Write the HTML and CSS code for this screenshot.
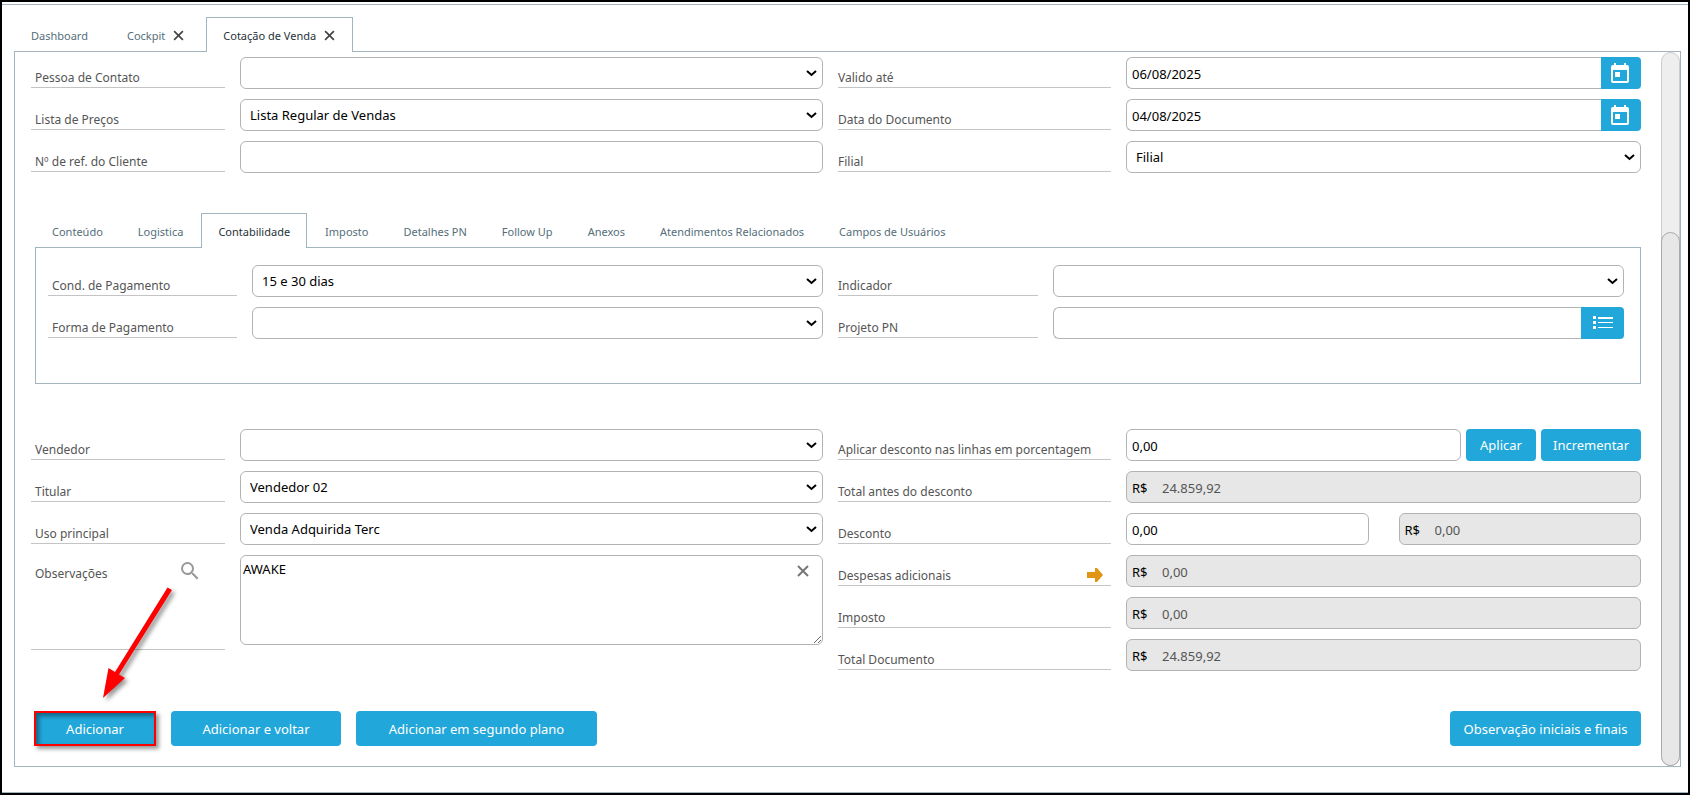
FILE: index.html
```html
<!DOCTYPE html>
<html lang="pt-BR">
<head>
    <meta charset="UTF-8">
    <meta name="viewport" content="width=device-width, initial-scale=1.0">
    <title>Cotação de Venda</title>
    <link rel="stylesheet" href="styles.css">
</head>
<body>
    <div class="window">
        <!-- Abas principais -->
        <nav class="tabs main-tabs">
            <button type="button" class="tab">Dashboard</button>
            <button type="button" class="tab">Cockpit
                <svg class="close" viewBox="0 0 10 10"><path d="M1 1l8 8M9 1l-8 8"/></svg>
            </button>
            <button type="button" class="tab active">Cotação de Venda
                <svg class="close" viewBox="0 0 10 10"><path d="M1 1l8 8M9 1l-8 8"/></svg>
            </button>
        </nav>

        <main class="panel">
            <form class="content">
                <!-- Cabeçalho -->
                <div class="grid">
                    <label for="contato" class="first">Pessoa de Contato</label>
                    <select id="contato"><option></option></select>
                    <label for="valido">Valido até</label>
                    <div class="group">
                        <input type="text" id="valido" value="06/08/2025">
                        <button type="button" class="addon" aria-label="Abrir calendário">
                            <svg class="calendar" viewBox="0 0 18 20"><path fill-rule="evenodd" d="M3 0h2v2h8V0h2v2h1a2 2 0 0 1 2 2v14a2 2 0 0 1-2 2H2a2 2 0 0 1-2-2V4a2 2 0 0 1 2-2h1zM2 7v11h14V7zM4 9h5v5H4z"/></svg>
                        </button>
                    </div>

                    <label for="precos" class="first">Lista de Preços</label>
                    <select id="precos"><option>Lista Regular de Vendas</option></select>
                    <label for="data">Data do Documento</label>
                    <div class="group">
                        <input type="text" id="data" value="04/08/2025">
                        <button type="button" class="addon" aria-label="Abrir calendário">
                            <svg class="calendar" viewBox="0 0 18 20"><path fill-rule="evenodd" d="M3 0h2v2h8V0h2v2h1a2 2 0 0 1 2 2v14a2 2 0 0 1-2 2H2a2 2 0 0 1-2-2V4a2 2 0 0 1 2-2h1zM2 7v11h14V7zM4 9h5v5H4z"/></svg>
                        </button>
                    </div>

                    <label for="ref" class="first">Nº de ref. do Cliente</label>
                    <input type="text" id="ref">
                    <label for="filial">Filial</label>
                    <select id="filial"><option>Filial</option></select>
                </div>

                <!-- Abas do documento -->
                <div class="details">
                    <nav class="tabs inner-tabs">
                        <button type="button" class="tab">Conteúdo</button>
                        <button type="button" class="tab">Logistica</button>
                        <button type="button" class="tab active">Contabilidade</button>
                        <button type="button" class="tab">Imposto</button>
                        <button type="button" class="tab">Detalhes PN</button>
                        <button type="button" class="tab">Follow Up</button>
                        <button type="button" class="tab">Anexos</button>
                        <button type="button" class="tab">Atendimentos Relacionados</button>
                        <button type="button" class="tab">Campos de Usuários</button>
                    </nav>
                    <div class="inner-panel grid">
                        <label for="cond" class="first">Cond. de Pagamento</label>
                        <select id="cond"><option>15 e 30 dias</option></select>
                        <label for="indicador">Indicador</label>
                        <select id="indicador"><option></option></select>

                        <label for="forma" class="first">Forma de Pagamento</label>
                        <select id="forma"><option></option></select>
                        <label for="projeto">Projeto PN</label>
                        <div class="group">
                            <input type="text" id="projeto">
                            <button type="button" class="addon wide" aria-label="Listar projetos">
                                <svg class="list" viewBox="0 0 20 14"><path d="M0 0h3v3H0zM0 5h3v3H0zM0 10h3v3H0zM5 1h15v2H5zM5 6h15v1H5zM5 11h15v1H5z"/></svg>
                            </button>
                        </div>
                    </div>
                </div>

                <!-- Totais -->
                <div class="grid">
                    <label for="vendedor" class="first">Vendedor</label>
                    <select id="vendedor"><option></option></select>
                    <label for="porcentagem">Aplicar desconto nas linhas em porcentagem</label>
                    <div class="group apply">
                        <input type="text" id="porcentagem" value="0,00">
                        <button type="button" class="btn apply-btn">Aplicar</button>
                        <button type="button" class="btn inc-btn">Incrementar</button>
                    </div>

                    <label for="titular" class="first">Titular</label>
                    <select id="titular"><option>Vendedor 02</option></select>
                    <label for="antes">Total antes do desconto</label>
                    <div class="money"><span>R$</span><input type="text" id="antes" value="24.859,92" readonly></div>

                    <label for="uso" class="first">Uso principal</label>
                    <select id="uso"><option>Venda Adquirida Terc</option></select>
                    <label for="desconto">Desconto</label>
                    <div class="discount">
                        <input type="text" id="desconto" value="0,00">
                        <div class="money"><span>R$</span><input type="text" aria-label="Valor do desconto" value="0,00" readonly></div>
                    </div>

                    <label for="obs" class="first notes-label">Observações
                        <svg class="search" viewBox="3 3 18 18"><path d="M15.500 14h-.79l-.28-.27A6.470 6.470 0 0 0 16 9.500 6.500 6.500 0 1 0 9.500 16c1.610 0 3.090-.59 4.230-1.570l.27.28v.79l5 4.990L20.490 19l-4.990-5zm-6 0C7.010 14 5 11.990 5 9.500S7.010 5 9.500 5 14 7.010 14 9.500 11.990 14 9.500 14z"/></svg>
                    </label>
                    <div class="notes">
                        <textarea id="obs">AWAKE</textarea>
                        <button type="button" class="clear" aria-label="Limpar">
                            <svg viewBox="0 0 12 12"><path d="M1 1l10 10M11 1L1 11"/></svg>
                        </button>
                    </div>
                    <label for="despesas">Despesas adicionais
                        <svg class="go" viewBox="0 0 16 14"><path d="M0 4h8V0h2l6 7-6 7H8v-4H0z"/></svg>
                    </label>
                    <div class="money"><span>R$</span><input type="text" id="despesas" value="0,00" readonly></div>

                    <label for="imposto">Imposto</label>
                    <div class="money"><span>R$</span><input type="text" id="imposto" value="0,00" readonly></div>

                    <label for="total">Total Documento</label>
                    <div class="money"><span>R$</span><input type="text" id="total" value="24.859,92" readonly></div>
                </div>

                <!-- Ações -->
                <div class="actions">
                    <div class="marked">
                        <button type="button" class="btn add">Adicionar</button>
                        <svg class="pointer" viewBox="0 0 80 120"><path d="M71.500 3.500L76 6 23 90.500l6 3.500L7 114l5.500-30 6.500 4z"/></svg>
                    </div>
                    <button type="button" class="btn add-back">Adicionar e voltar</button>
                    <button type="button" class="btn add-bg">Adicionar em segundo plano</button>
                    <button type="button" class="btn notes-btn">Observação iniciais e finais</button>
                </div>
            </form>
            <div class="scrollbar"><div class="thumb"></div></div>
        </main>
    </div>
</body>
</html>
```
FILE: styles.css
```css
* {
    box-sizing: border-box;
}
body {
    margin: 0;
    font-family: "Noto Sans", "Open Sans", sans-serif;
    font-size: 13px;
    background-color: #fff;
}
.window {
    min-height: 100vh;
    border: 2px solid #000;
    padding: 15px 7px 0 12px;
    /* linhas finas no topo e no rodapé */
    background:
        linear-gradient(#a3b5be, #a3b5be) 0 2px / 100% 1px no-repeat,
        linear-gradient(#a3b5be, #a3b5be) 0 100% / 100% 1px no-repeat;
}
button, input, select, textarea {
    font: inherit;
}

/* abas */
.tabs {
    display: flex;
    position: relative;
    z-index: 1;
    margin-bottom: -1px;
}
.tab {
    display: flex;
    align-items: center;
    height: 35px;
    padding: 1px 16px 0;
    font-size: 11px;
    color: #546e7a;
    background: none;
    border: 1px solid transparent;
    border-bottom: none;
    white-space: nowrap;
    cursor: pointer;
}
.tab.active {
    color: #263238;
    background-color: #fff;
    border-color: #a3b5be;
}
.main-tabs {
    gap: 4px;
}
.main-tabs .tab {
    padding-right: 17px;
}
.inner-tabs {
    gap: 1px;
}
.close {
    width: 11px;
    height: 11px;
    margin-left: 8px;
    stroke: #444;
    stroke-width: 1.5;
}

/* painel */
.panel {
    display: flex;
    border: 1px solid #a3b5be;
}
.content {
    flex: 1;
    min-width: 0;
    padding: 5px 20px 20px 16px;
}
.scrollbar {
    width: 19px;
    display: flex;
    flex-direction: column;
    justify-content: flex-end;
    background-color: #eee;
    border: 1px solid #ccc;
    border-radius: 10px;
}
.thumb {
    height: 75%;
    margin: -1px;
    background-color: #e7e7e7;
    border: 1px solid #aaa;
    border-radius: 10px;
}

/* formulário */
.grid {
    display: grid;
    grid-template-columns: 194fr 583fr 273fr 515fr;
    grid-auto-rows: minmax(32px, auto);
    gap: 10px 15px;
}
.grid > * {
    min-width: 0;
}
label {
    display: flex;
    align-items: center;
    justify-content: space-between;
    height: 31px;
    padding-top: 10px;
    font-size: 12px;
    color: #555;
    border-bottom: 1px solid #c4c4c4;
    white-space: nowrap;
}
.first {
    padding-left: 4px;
}
input, select, textarea, .money {
    width: 100%;
    height: 32px;
    color: #000;
    background-color: #fff;
    border: 1px solid #b3b3b3;
    border-radius: 6px;
}
input {
    padding: 2px 5px 0;
}
select {
    padding: 0 24px 0 9px;
    appearance: none;
    background: #fff url("data:image/svg+xml,%3Csvg xmlns='http://www.w3.org/2000/svg' width='11' height='8' fill='none' stroke='black' stroke-width='2'%3E%3Cpath d='M1 2l4.500 4L10 2'/%3E%3C/svg%3E") right 5px center no-repeat;
}
.group {
    display: flex;
}
.group input {
    flex: 1;
    min-width: 0;
}
.group input:has(+ .addon) {
    border-right: none;
    border-radius: 6px 0 0 6px;
}
.addon {
    display: flex;
    align-items: center;
    justify-content: center;
    width: 40px;
    height: 32px;
    padding: 0 2px 0 0;
    background-color: #21a7da;
    border: none;
    border-radius: 0 4px 4px 0;
    cursor: pointer;
}
.addon.wide {
    width: 43px;
    padding: 0;
}
.addon svg {
    fill: #fff;
}
.calendar {
    width: 18px;
    height: 20px;
}
.list {
    width: 20px;
    height: 14px;
}
.btn {
    height: 35px;
    padding: 0;
    color: #fff;
    background-color: #21a7da;
    border: none;
    border-radius: 4px;
    white-space: nowrap;
    cursor: pointer;
}
.apply {
    gap: 5px;
}
.apply .btn {
    height: 32px;
}
.apply-btn {
    width: 70px;
}
.inc-btn {
    width: 100px;
}
.discount {
    display: grid;
    grid-template-columns: 1fr 1fr;
    gap: 30px;
}
.money {
    display: flex;
    align-items: center;
    padding-left: 5px;
    background-color: #e7e7e7;
}
.money span {
    width: 25px;
    padding-top: 2px;
}
.money input {
    flex: 1;
    min-width: 0;
    height: 30px;
    color: #555;
    background: none;
    border: none;
}
.go {
    width: 16px;
    height: 14px;
    margin-right: 8px;
    fill: #e29414;
}

/* observações */
.notes-label {
    grid-row: 4 / 7;
    grid-column: 1;
    align-items: flex-start;
    height: 95px;
    line-height: 24px;
    padding-top: 7px;
}
.notes {
    position: relative;
    grid-row: 4 / 7;
    grid-column: 2;
}
.notes textarea {
    display: block;
    height: 90px;
    padding: 4px 2px;
}
.search {
    width: 18px;
    height: 18px;
    margin-right: 26px;
    fill: #999;
}
.clear {
    position: absolute;
    top: 10px;
    right: 14px;
    width: 12px;
    height: 12px;
    padding: 0;
    background: none;
    border: none;
    cursor: pointer;
}
.clear svg {
    display: block;
    stroke: #777;
    stroke-width: 2;
}

/* abas internas */
.details {
    margin: 40px 0 45px 4px;
}
.inner-panel {
    grid-template-columns: 189fr 571fr 200fr 571fr;
    padding: 17px 16px 44px 12px;
    border: 1px solid #a3b5be;
}

/* botões do rodapé */
.actions {
    display: flex;
    gap: 15px;
    margin: 40px 0 0 3px;
}
.marked {
    position: relative;
}
.add {
    width: 122px;
    border: 2px solid #f00;
    border-radius: 0;
    box-shadow: 3px 3px 4px rgba(0, 0, 0, 0.4), inset 3px 3px 4px rgba(0, 0, 0, 0.4);
}
.add-back {
    width: 170px;
}
.add-bg {
    width: 241px;
}
.notes-btn {
    width: 191px;
    margin-left: auto;
}
/* seta que aponta para Adicionar */
.pointer {
    position: absolute;
    left: 62px;
    bottom: 42px;
    width: 80px;
    height: 120px;
    fill: #f00;
    filter: drop-shadow(3px 3px 2px rgba(0, 0, 0, 0.4));
    pointer-events: none;
}
```
